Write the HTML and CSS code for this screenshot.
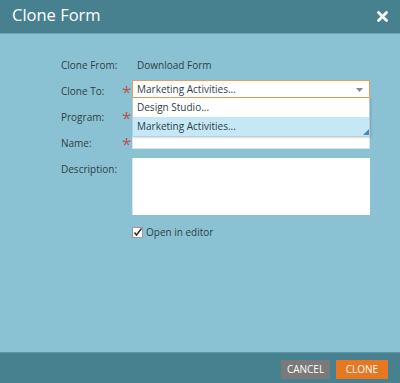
FILE: index.html
```html
<!DOCTYPE html>
<html>
<head>
<meta charset="utf-8">
<link rel="stylesheet" href="styles.css">
</head>
<body>
<div class="dialog">
  <div class="header">
    <span class="title">Clone Form</span>
    <svg class="close" width="11" height="11" viewBox="0 0 11 11"><path d="M1.5 1.5 L9.5 9.5 M9.5 1.5 L1.5 9.5" stroke="#fff" stroke-width="2.8" stroke-linecap="round"/></svg>
  </div>
  <div class="body">
    <div class="row r-from">
      <div class="label">Clone From:</div>
      <div class="req"></div>
      <div class="value">Download Form</div>
    </div>
    <div class="row r-to">
      <div class="label">Clone To:</div>
      <div class="req">*</div>
      <div class="field">
        <div class="select">
          <span>Marketing Activities...</span>
          <svg class="caret" width="7" height="4" viewBox="0 0 7 4"><path d="M0 0 H7 L3.5 4 Z" fill="#888"/></svg>
        </div>
        <div class="menu">
          <div class="opt">Design Studio...</div>
          <div class="opt sel">Marketing Activities...</div>
          <svg class="grip" width="6" height="6" viewBox="0 0 6 6"><path d="M6 0 V6 H0 Z" fill="#3d8fb5"/></svg>
        </div>
      </div>
    </div>
    <div class="row r-prog">
      <div class="label">Program:</div>
      <div class="req">*</div>
      <div class="field"></div>
    </div>
    <div class="row r-name">
      <div class="label">Name:</div>
      <div class="req">*</div>
      <div class="field"><div class="input"></div></div>
    </div>
    <div class="row r-desc">
      <div class="label">Description:</div>
      <div class="req"></div>
      <div class="field"><div class="textarea"></div></div>
    </div>
    <div class="row r-check">
      <div class="label"></div>
      <div class="req"></div>
      <label class="cb">
        <svg width="11" height="11" viewBox="0 0 11 11"><rect x="0.5" y="0.5" width="10" height="10" fill="#fff" stroke="#9a9a9a"/><path d="M2.5 5.5 L4.5 8 L9.5 1.5" stroke="#333" stroke-width="1.5" fill="none"/></svg>
        <span>Open in editor</span>
      </label>
    </div>
  </div>
  <div class="footer">
    <button class="btn cancel">CANCEL</button>
    <button class="btn clone">CLONE</button>
  </div>
</div>
</body>
</html>
```
FILE: styles.css
```css
* { box-sizing: border-box; }
html, body { margin: 0; padding: 0; }
body {
  width: 400px;
  height: 383px;
  font-family: "Open Sans", "Liberation Sans", sans-serif;
  font-size: 10px;
  color: #2f3e44;
  overflow: hidden;
}
.dialog {
  width: 400px;
  height: 383px;
  display: flex;
  flex-direction: column;
  background: #8ac2d3;
}
.header {
  height: 34px;
  background: #47808f;
  border-bottom: 1px solid #6aa6b8;
  display: flex;
  align-items: center;
  justify-content: space-between;
  padding: 0 12px;
  flex: none;
}
.title {
  color: #fff;
  font-size: 16.5px;
  line-height: 1;
  margin-top: -2px;
}
.close { margin-top: -1px; }
.body {
  flex: 1;
  padding: 23px 30px 0 61px;
  display: flex;
  flex-direction: column;
}
.row {
  display: flex;
  align-items: flex-start;
  height: 26px;
}
.label {
  width: 61px;
  white-space: nowrap;
  line-height: 16px;
}
.req {
  width: 10px;
  color: #c0504d;
  font-size: 17px;
  line-height: 18px;
  height: 16px;
}
.value { line-height: 16px; padding-left: 5px; }
.field {
  width: 238px;
  position: relative;
}
.r-to .field { margin-top: -3px; }
.select {
  height: 18px;
  background: #fff;
  border: 1px solid #eb9b57;
  display: flex;
  align-items: center;
  justify-content: space-between;
  padding: 0 6px 0 4px;
  line-height: 16px;
}
.caret { margin-top: 1px; }
.menu {
  position: absolute;
  left: 0;
  top: 18px;
  width: 238px;
  background: #fff;
  border: 1px solid #b9cdd4;
  border-top: none;
  box-shadow: 1px 1px 2px rgba(0,0,0,0.15);
  z-index: 2;
}
.opt {
  height: 19px;
  line-height: 19px;
  padding-left: 4px;
}
.opt.sel { background: #c5e8f6; }
.grip { position: absolute; right: 0; bottom: 1px; }
.r-name .field { margin-top: -3px; }
.input {
  height: 17px;
  background: #fff;
  border: 1px solid #d7e6eb;
}
.r-desc { height: 63px; }
.r-desc .field { margin-top: -3px; }
.textarea {
  height: 57px;
  background: #fff;
  border-left: 1px solid #d7e6eb;
}
.cb {
  display: flex;
  align-items: center;
  gap: 3px;
  line-height: 16px;
}
.footer {
  height: 31px;
  background: #47808f;
  border-top: 1px solid #5d97a7;
  display: flex;
  justify-content: flex-end;
  align-items: center;
  gap: 6px;
  padding: 0 12px 0 0;
  flex: none;
}
.btn {
  font-family: "Open Sans", "Liberation Sans", sans-serif;
  font-size: 10px;
  color: #fff;
  border: none;
  height: 19px;
  padding: 0;
  margin-top: 2px;
}
.cancel { background: #7a7a7a; width: 49px; }
.clone { background: #e87722; width: 52px; }
```
